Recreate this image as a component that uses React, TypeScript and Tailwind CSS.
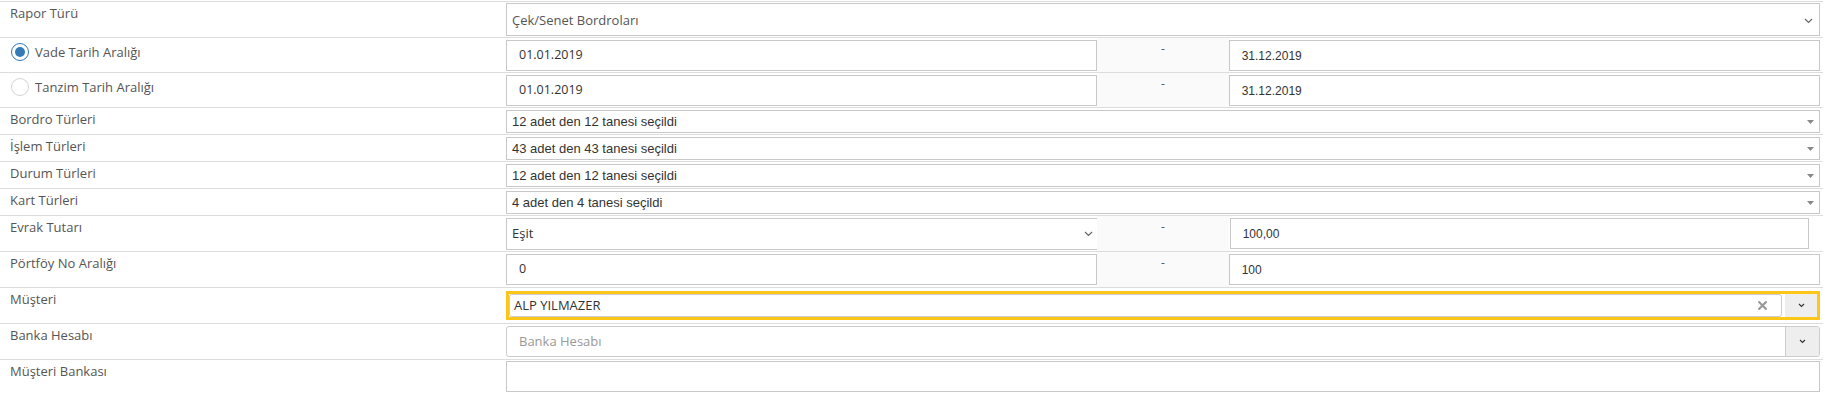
import React from 'react';

const OPEN = "font-['Open_Sans',sans-serif]";
const ARIAL = "font-['Liberation_Sans',Arial,sans-serif]";

const Chevron = ({ className = '' }: { className?: string }) => (
  <svg width="9" height="6" viewBox="0 0 9 6" className={className}>
    <path d="M1 1l3.5 3.5L8 1" fill="none" stroke="#666" strokeWidth="1.2" />
  </svg>
);

const SmallChevron = () => (
  <svg width="7" height="5" viewBox="0 0 7 5">
    <path d="M1 1l2.5 2.5L6 1" fill="none" stroke="#333" strokeWidth="1.1" />
  </svg>
);

const Caret = () => (
  <svg width="7" height="4" viewBox="0 0 7 4">
    <path d="M0 0h7L3.5 4z" fill="#888" />
  </svg>
);

const ClearX = () => (
  <svg width="9" height="9" viewBox="0 0 9 9">
    <path d="M1.2 1.2l6.6 6.6M7.8 1.2L1.2 7.8" stroke="#999" strokeWidth="2.2" strokeLinecap="square" />
  </svg>
);

const Row = ({ label, h, children }: { label: React.ReactNode; h: string; children: React.ReactNode }) => (
  <div className={`flex border-t border-[#dddddd] ${h}`}>
    <div className="w-[506px] shrink-0 pl-[10px] pt-[3px] text-[13px] leading-[16px] text-[#555]">{label}</div>
    <div className="min-w-0 flex-1 pr-[3px]">{children}</div>
  </div>
);

const Radio = ({ checked, label }: { checked?: boolean; label: string }) => (
  <div className="-mt-[3px] flex items-center gap-[6px] pt-[5px] pl-px">
    <span
      className={`flex h-[18px] w-[18px] items-center justify-center rounded-full border bg-white ${
        checked ? 'border-[#3a78bd]' : 'border-[#d4d4d4]'
      }`}
    >
      {checked && <span className="h-[10px] w-[10px] rounded-full bg-[#337ab7]" />}
    </span>
    <span>{label}</span>
  </div>
);

const TextBox = ({ value, arial, className = '' }: { value: string; arial?: boolean; className?: string }) => (
  <div
    className={`mt-[2px] flex h-[31px] items-center border border-[#c8c8c8] bg-white pl-[12px] text-[#333] ${
      arial ? `text-[12px] ${ARIAL}` : `text-[12.5px] ${OPEN}`
    } ${className}`}
  >
    {value}
  </div>
);

const Range = ({ left, right }: { left: React.ReactNode; right: React.ReactNode }) => (
  <div className="flex h-full">
    <div className="w-[45%]">{left}</div>
    <div className="w-[10%] bg-[#fafafa] pt-[3px] text-center text-[12px] leading-[16px] text-[#555]">-</div>
    <div className="w-[45%]">{right}</div>
  </div>
);

const MultiSelect = ({ text }: { text: string }) => (
  <div className={`mt-[2px] flex h-[23px] items-center justify-between border border-[#c8c8c8] bg-white pr-[5px] pl-[5px] text-[13px] text-[#333] ${ARIAL}`}>
    <span>{text}</span>
    <Caret />
  </div>
);

export default function App() {
  return (
    <div className={`w-full bg-white pt-px ${OPEN}`}>
      <Row label="Rapor Türü" h="h-[36px]">
        <div className="mt-px flex h-[33px] items-center justify-between border border-[#c8c8c8] bg-white pr-[6px] pl-[5px] pt-[2px] text-[13px] text-[#555]">
          <span>Çek/Senet Bordroları</span>
          <Chevron />
        </div>
      </Row>
      <Row label={<Radio checked label="Vade Tarih Aralığı" />} h="h-[35px]">
        <Range left={<TextBox value="01.01.2019" />} right={<TextBox value="31.12.2019" arial />} />
      </Row>
      <Row label={<Radio label="Tanzim Tarih Aralığı" />} h="h-[35px]">
        <Range left={<TextBox value="01.01.2019" />} right={<TextBox value="31.12.2019" arial />} />
      </Row>
      <Row label="Bordro Türleri" h="h-[27px]">
        <MultiSelect text="12 adet den 12 tanesi seçildi" />
      </Row>
      <Row label="İşlem Türleri" h="h-[27px]">
        <MultiSelect text="43 adet den 43 tanesi seçildi" />
      </Row>
      <Row label="Durum Türleri" h="h-[27px]">
        <MultiSelect text="12 adet den 12 tanesi seçildi" />
      </Row>
      <Row label="Kart Türleri" h="h-[27px]">
        <MultiSelect text="4 adet den 4 tanesi seçildi" />
      </Row>
      <Row label="Evrak Tutarı" h="h-[36px]">
        <Range
          left={
            <div className="mt-[2px] mr-[-3px] flex h-[32px] items-center justify-between border border-[#c8c8c8] bg-white pr-[6px] pl-[5px] text-[13px] text-[#333]">
              <span>Eşit</span>
              <Chevron />
            </div>
          }
          right={<TextBox value="100,00" arial className="mr-[11px] ml-px" />}
        />
      </Row>
      <Row label="Pörtföy No Aralığı" h="h-[36px]">
        <Range left={<TextBox value="0" />} right={<TextBox value="100" arial />} />
      </Row>
      <Row label="Müşteri" h="h-[36px]">
        <div className="mt-[3px] flex h-[29px] border-[3px] border-[#ffc61a] bg-white">
          <div className="flex flex-1 items-center rounded-[3px] border border-[#cccccc] pr-[14px] pl-[4px] text-[13px] text-[#333]">
            <span className="flex-1">ALP YILMAZER</span>
            <ClearX />
          </div>
          <div className="ml-[3px] flex w-[32px] items-center justify-center bg-[#eeeeee]">
            <SmallChevron />
          </div>
        </div>
      </Row>
      <Row label="Banka Hesabı" h="h-[36px]">
        <div className="mt-[2px] flex h-[31px] overflow-hidden rounded-[3px] border border-[#cccccc] bg-white">
          <div className="flex flex-1 items-center pl-[12px] text-[13px] text-[#999]">Banka Hesabı</div>
          <div className="flex w-[34px] items-center justify-center border-l border-[#cccccc] bg-[#eeeeee]">
            <SmallChevron />
          </div>
        </div>
      </Row>
      <Row label="Müşteri Bankası" h="h-[36px]">
        <div className="mt-px h-[31px] border border-[#c8c8c8] bg-white" />
      </Row>
    </div>
  );
}
